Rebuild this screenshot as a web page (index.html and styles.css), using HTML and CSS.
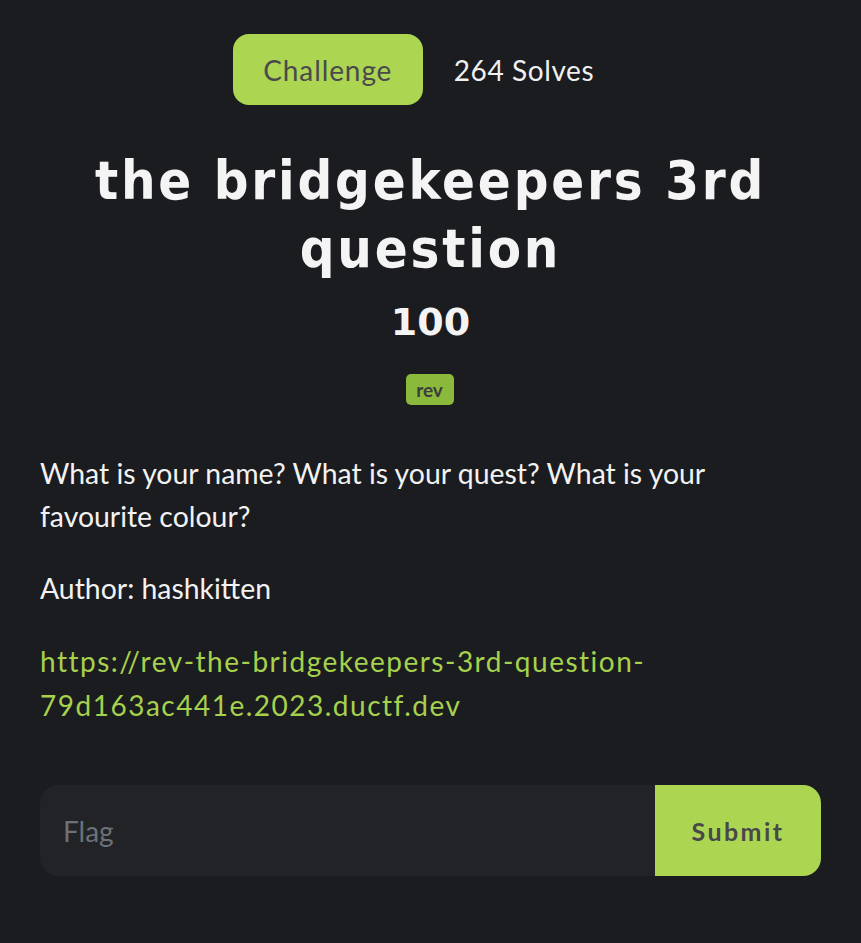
FILE: index.html
```html
<!DOCTYPE html>
<html>
<head>
<meta charset="utf-8">
<link rel="stylesheet" href="styles.css">
</head>
<body>
<main class="page">
  <div class="meta">
    <span class="pill">Challenge</span>
    <span class="solves">264 Solves</span>
  </div>
  <h1 class="title">the bridgekeepers 3rd question</h1>
  <div class="points">100</div>
  <div class="tags"><span class="tag">rev</span></div>
  <div class="desc">
    <p>What is your name? What is your quest? What is your favourite colour?</p>
    <p>Author: hashkitten</p>
    <p class="link">https://rev-the-bridgekeepers-3rd-question-79d163ac441e.2023.ductf.dev</p>
  </div>
  <form class="flag-form">
    <input class="flag-input" type="text" placeholder="Flag">
    <button class="submit" type="button">Submit</button>
  </form>
</main>
</body>
</html>
```
FILE: styles.css
```css
html, body {
  margin: 0;
  padding: 0;
  background: #1b1c20;
}
.page {
  width: 781px;
  margin: 0 auto;
  padding-top: 34px;
  color: #f2f2f2;
}
.meta {
  display: flex;
  justify-content: center;
  align-items: center;
  gap: 31px;
  margin-right: 34px;
}
.pill {
  display: flex;
  align-items: center;
  justify-content: center;
  width: 190px;
  height: 71px;
  border-radius: 16px;
  background: #acd651;
  color: #4a4a4e;
  font-family: "Lato", sans-serif;
  font-size: 28px;
  letter-spacing: 0.9px;
}
.solves {
  font-family: "Lato", sans-serif;
  font-size: 28px;
  color: #f0f0f0;
  letter-spacing: 0.6px;
}
.title {
  margin: 42px 0 0;
  text-align: center;
  font-family: "DejaVu Sans Condensed", sans-serif;
  font-weight: bold;
  font-size: 54px;
  line-height: 68px;
  letter-spacing: 2.8px;
  color: #f4f4f4;
}
.points {
  margin-top: 17px;
  text-align: center;
  font-family: "DejaVu Sans", sans-serif;
  font-weight: bold;
  font-size: 38px;
  line-height: 44px;
  color: #f4f4f4;
}
.tags {
  display: flex;
  justify-content: center;
  margin-top: 30px;
}
.tag {
  display: inline-flex;
  align-items: center;
  justify-content: center;
  width: 48px;
  height: 31px;
  border-radius: 5px;
  background: #8ab93b;
  color: #3c3c3e;
  font-family: "Lato", sans-serif;
  font-weight: bold;
  font-size: 19px;
  margin-left: -2px;
}
.desc {
  margin-top: 47px;
  font-family: "Lato", sans-serif;
  font-size: 28.4px;
  line-height: 43px;
  color: #f2f2f2;
}
.desc p {
  margin: 0 0 29px;
}
.desc .link {
  color: #a6d14d;
  font-family: "Lato", sans-serif;
  font-size: 28px;
  letter-spacing: 1.5px;
  line-height: 44px;
  margin-top: 2px;
  margin-bottom: 0;
}
.flag-form {
  display: flex;
  margin-top: 58px;
  height: 91px;
  border-radius: 18px;
  overflow: hidden;
  background: #222326;
}
.flag-input {
  flex: 1;
  border: 0;
  outline: none;
  background: transparent;
  padding: 0 0 0 23px;
  font-family: "Lato", sans-serif;
  font-size: 28px;
  color: #e0e0e0;
}
.flag-input::placeholder {
  color: #6c7177;
}
.submit {
  width: 166px;
  border: 0;
  background: #acd651;
  color: #48484c;
  font-family: "Lato", sans-serif;
  font-weight: bold;
  font-size: 25px;
  letter-spacing: 2.4px;
}
```
